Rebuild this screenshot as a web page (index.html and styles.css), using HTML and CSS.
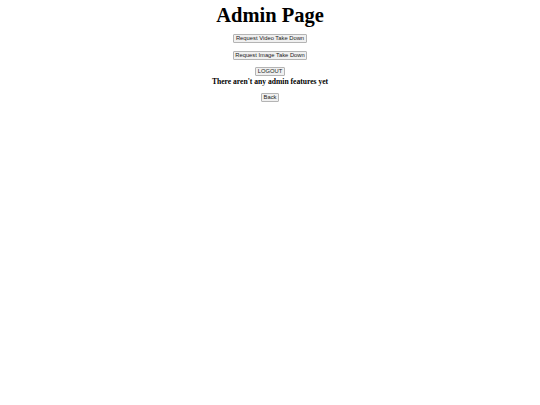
FILE: index.html
```html
<!DOCTYPE html>
<html>
<head>
<meta charset="utf-8">
<link rel="stylesheet" href="styles.css">
</head>
<body>
<div class="page">
  <h1 class="title">Admin Page</h1>
  <button class="btn first">Request Video Take Down</button>
  <button class="btn gap">Request Image Take Down</button>
  <button class="btn gap">LOGOUT</button>
  <h3 class="note">There aren't any admin features yet</h3>
  <button class="btn back">Back</button>
</div>
</body>
</html>
```
FILE: styles.css
```css
html, body {
  margin: 0;
  padding: 0;
  background: #ffffff;
}
.page {
  display: flex;
  flex-direction: column;
  align-items: center;
  font-family: "Liberation Serif", serif;
  color: #000;
}
.title {
  font-family: "Liberation Serif", serif;
  font-weight: bold;
  font-size: 20.5px;
  line-height: 24px;
  margin: 3px 0 0 0;
}
.btn {
  font-family: "Liberation Sans", Arial, sans-serif;
  font-size: 5.8px;
  line-height: 7px;
  height: 9px;
  padding: 0 1.5px;
  border: 1px solid #b4b4b4;
  border-radius: 1px;
  background: #f0f0f0;
  color: #222;
  box-sizing: border-box;
}
.first { margin-top: 7px; }
.gap { margin-top: 7.5px; }
.note {
  font-family: "Liberation Serif", serif;
  font-weight: bold;
  font-size: 7.6px;
  line-height: 9px;
  margin: 1px 0 0 0;
}
.back { margin-top: 7px; }
```
